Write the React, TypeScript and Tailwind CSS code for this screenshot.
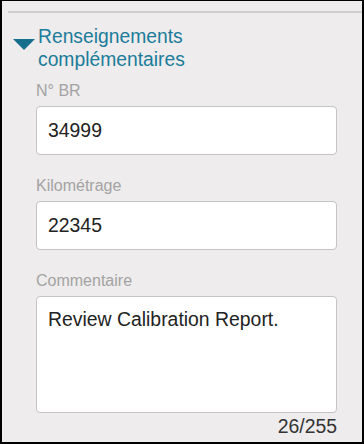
export default function App() {
  return (
    <div
      className="w-[364px] h-[444px] bg-[#eeecec] border-black border-t border-x-2 border-b-2 overflow-hidden"
      style={{ fontFamily: '"Liberation Sans", Arial, sans-serif' }}
    >
      <div className="ml-[6px] mt-[10px] h-[2px] bg-[#cfcdcd]" />
      <div className="flex items-start mt-[12px]">
        <svg width="22" height="11" viewBox="0 0 22 11" className="ml-[11px] mt-[14px] shrink-0">
          <polygon points="0,0 22,0 11,11" fill="#166f8c" />
        </svg>
        <h2 className="ml-[3px] text-[19.3px] leading-[23px] text-[#1b7c9b]">
          Renseignements
          <br />
          complémentaires
        </h2>
      </div>
      <div className="pl-[34px] pr-[25px] mt-[11px]">
        <Field label="N° BR" value="34999" />
        <Field label="Kilométrage" value="22345" />
        <div className="flex flex-col">
          <label className="text-[16px] leading-[18px] text-[#a3a3a3]">Commentaire</label>
          <textarea
            readOnly
            value="Review Calibration Report."
            className="mt-[6px] h-[117px] w-full resize-none rounded-[4px] border border-[#c4c4c4] bg-white px-[11px] pt-[11px] text-[19.4px] leading-[22px] text-[#222] outline-none"
          />
          <div className="mt-[2px] text-right text-[19.4px] leading-[22px] text-[#333]">26/255</div>
        </div>
      </div>
    </div>
  )
}

function Field({ label, value }: { label: string; value: string }) {
  return (
    <div className="flex flex-col mb-[22px]">
      <label className="text-[16px] leading-[18px] text-[#a3a3a3]">{label}</label>
      <input
        readOnly
        value={value}
        className="mt-[6px] h-[49px] w-full rounded-[4px] border border-[#c4c4c4] bg-white px-[11px] text-[19.4px] text-[#222] outline-none"
      />
    </div>
  )
}
